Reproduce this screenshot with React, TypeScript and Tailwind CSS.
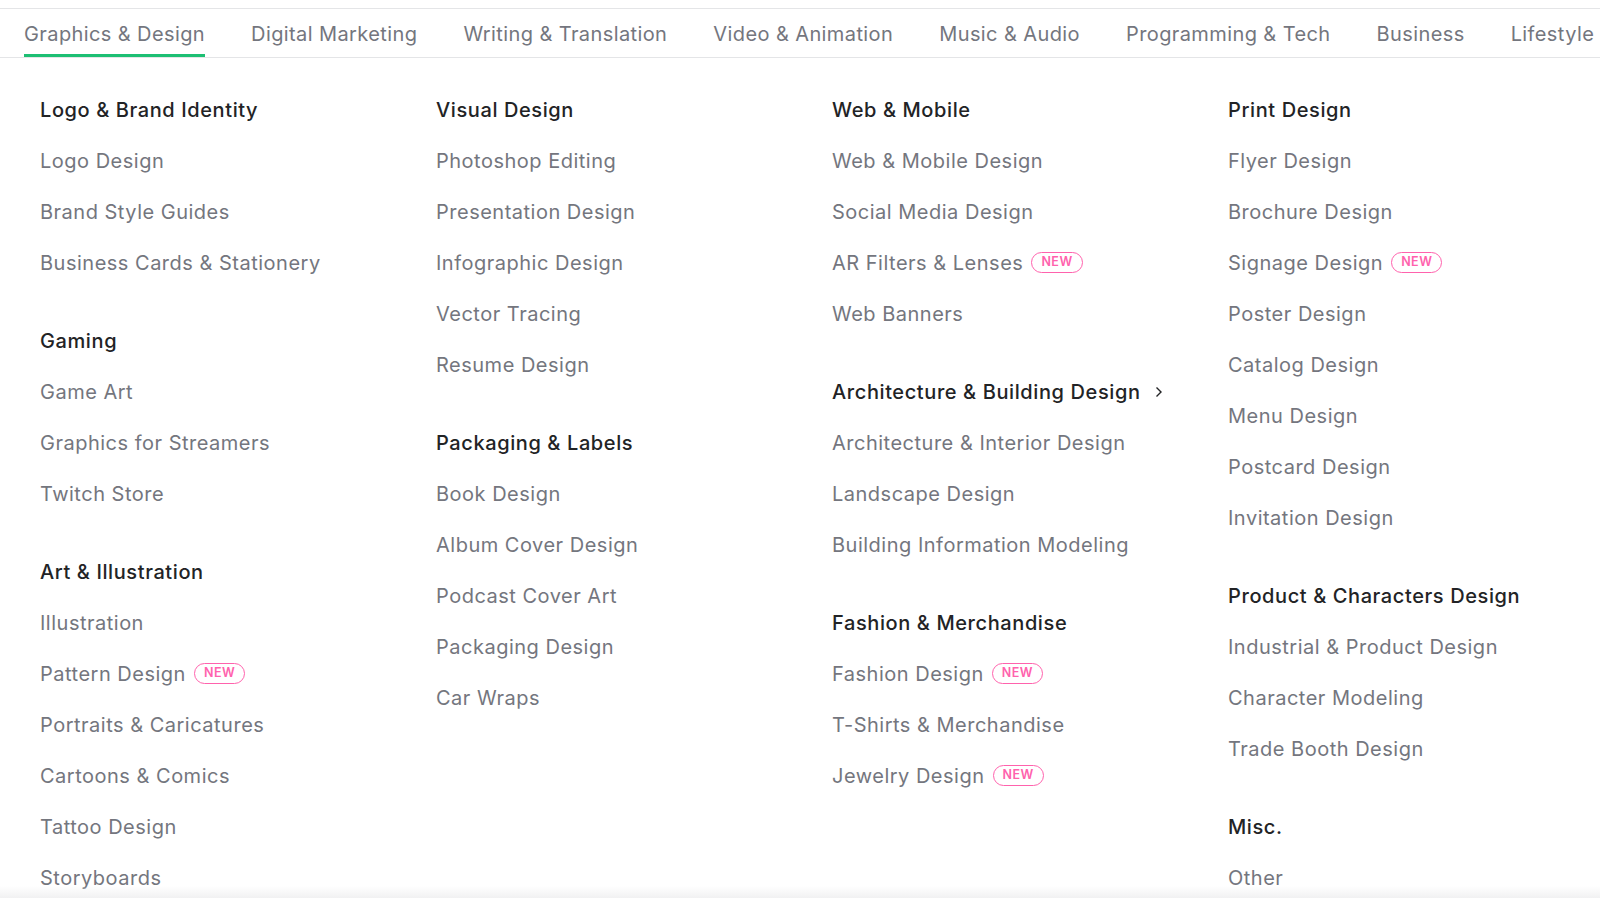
import { ReactNode } from "react";

type Item = { label: string; isNew?: boolean };
type Group = { title: string; arrow?: boolean; items: Item[] };

const tabs = [
  "Graphics & Design",
  "Digital Marketing",
  "Writing & Translation",
  "Video & Animation",
  "Music & Audio",
  "Programming & Tech",
  "Business",
  "Lifestyle",
];

const columns: Group[][] = [
  [
    {
      title: "Logo & Brand Identity",
      items: [{ label: "Logo Design" }, { label: "Brand Style Guides" }, { label: "Business Cards & Stationery" }],
    },
    {
      title: "Gaming",
      items: [{ label: "Game Art" }, { label: "Graphics for Streamers" }, { label: "Twitch Store" }],
    },
    {
      title: "Art & Illustration",
      items: [
        { label: "Illustration" },
        { label: "Pattern Design", isNew: true },
        { label: "Portraits & Caricatures" },
        { label: "Cartoons & Comics" },
        { label: "Tattoo Design" },
        { label: "Storyboards" },
      ],
    },
  ],
  [
    {
      title: "Visual Design",
      items: [
        { label: "Photoshop Editing" },
        { label: "Presentation Design" },
        { label: "Infographic Design" },
        { label: "Vector Tracing" },
        { label: "Resume Design" },
      ],
    },
    {
      title: "Packaging & Labels",
      items: [
        { label: "Book Design" },
        { label: "Album Cover Design" },
        { label: "Podcast Cover Art" },
        { label: "Packaging Design" },
        { label: "Car Wraps" },
      ],
    },
  ],
  [
    {
      title: "Web & Mobile",
      items: [
        { label: "Web & Mobile Design" },
        { label: "Social Media Design" },
        { label: "AR Filters & Lenses", isNew: true },
        { label: "Web Banners" },
      ],
    },
    {
      title: "Architecture & Building Design",
      arrow: true,
      items: [
        { label: "Architecture & Interior Design" },
        { label: "Landscape Design" },
        { label: "Building Information Modeling" },
      ],
    },
    {
      title: "Fashion & Merchandise",
      items: [
        { label: "Fashion Design", isNew: true },
        { label: "T-Shirts & Merchandise" },
        { label: "Jewelry Design", isNew: true },
      ],
    },
  ],
  [
    {
      title: "Print Design",
      items: [
        { label: "Flyer Design" },
        { label: "Brochure Design" },
        { label: "Signage Design", isNew: true },
        { label: "Poster Design" },
        { label: "Catalog Design" },
        { label: "Menu Design" },
        { label: "Postcard Design" },
        { label: "Invitation Design" },
      ],
    },
    {
      title: "Product & Characters Design",
      items: [
        { label: "Industrial & Product Design" },
        { label: "Character Modeling" },
        { label: "Trade Booth Design" },
      ],
    },
    {
      title: "Misc.",
      items: [{ label: "Other" }],
    },
  ],
];

function Row({ children }: { children: ReactNode }) {
  return <div className="h-[51px] flex items-center whitespace-nowrap">{children}</div>;
}

function NewBadge() {
  return (
    <span className="ml-[8px] h-[21px] px-[9px] flex items-center rounded-full border-[1.5px] border-[#ff62ad] text-[#ff62ad] text-[12.5px] font-semibold tracking-[0.04em]">
      NEW
    </span>
  );
}

export default function App() {
  return (
    <div className="relative w-full h-[898px] overflow-hidden bg-white font-['Inter',sans-serif]">
      <div className="h-[8px]" />

      {/* category tabs */}
      <nav className="h-[50px] flex gap-[46px] pl-[24px] border-y border-[#e4e5e7] whitespace-nowrap">
        {tabs.map((t, i) => (
          <div
            key={t}
            className={
              "flex items-center pt-[5px] border-b-[3px] text-[20px] tracking-[0.02em] text-[#74767e] " +
              (i === 0 ? "border-[#1dbf73]" : "border-transparent")
            }
          >
            {t}
          </div>
        ))}
      </nav>

      {/* sub categories */}
      <div className="grid grid-cols-[repeat(4,396px)] pl-[40px] pt-[26px]">
        {columns.map((groups, ci) => (
          <div key={ci} className="flex flex-col gap-[27px]">
            {groups.map((g) => (
              <div key={g.title} className="flex flex-col">
                <Row>
                  <span className="text-[20px] font-medium tracking-[0.03em] text-[#222325]">{g.title}</span>
                  {g.arrow && (
                    <svg className="ml-[14px]" width="8" height="12" viewBox="0 0 8 12" fill="none">
                      <polyline points="1.5,1.5 6,6 1.5,10.5" stroke="#222325" strokeWidth="1.4" />
                    </svg>
                  )}
                </Row>
                {g.items.map((it) => (
                  <Row key={it.label}>
                    <span className="text-[20px] tracking-[0.025em] text-[#74767e]">{it.label}</span>
                    {it.isNew && <NewBadge />}
                  </Row>
                ))}
              </div>
            ))}
          </div>
        ))}
      </div>

      {/* soft shadow at the bottom of the dropdown */}
      <div className="absolute left-0 right-0 bottom-0 h-[12px] bg-gradient-to-b from-transparent to-[#f1f1f2]" />
    </div>
  );
}
